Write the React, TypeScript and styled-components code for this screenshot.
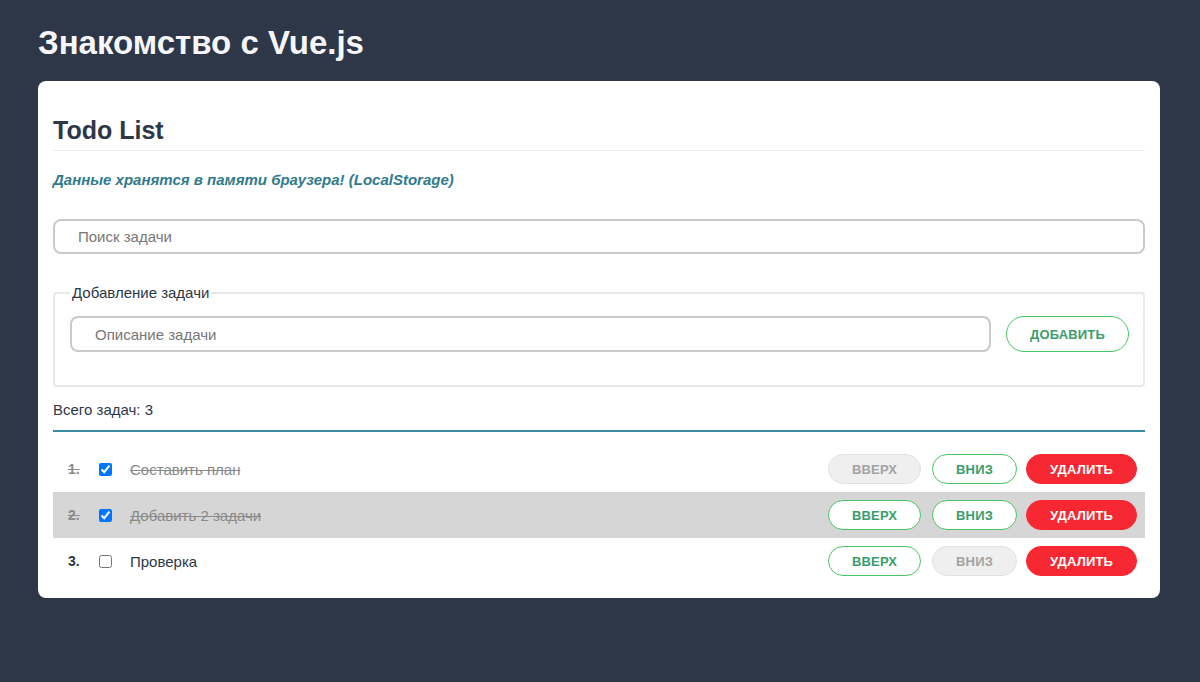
import React, { useState } from "react";
import styled, { createGlobalStyle, css } from "styled-components";

const GlobalStyle = createGlobalStyle`
  html, body { margin: 0; padding: 0; background: #2d3748; }
  body { font-family: "Liberation Sans", Arial, sans-serif; color: #2d3748; }
  * { box-sizing: border-box; }
`;

const Page = styled.div`
  padding: 0 40px 0 38px;
`;

const Title = styled.h1`
  margin: 0;
  padding: 24px 0 20px;
  font-size: 33px;
  line-height: 37px;
  font-weight: 700;
  color: #f7f7fb;
`;

const Card = styled.div`
  background: #fff;
  border-radius: 8px;
  padding: 15px 15px 14px;
`;

const CardTitle = styled.h2`
  margin: 20px 0 0;
  padding-bottom: 6px;
  font-size: 25px;
  line-height: 28px;
  font-weight: 700;
  color: #2d3748;
  border-bottom: 1px solid #ececec;
`;

const Note = styled.p`
  margin: 21px 0 0;
  font-size: 15px;
  line-height: 16px;
  font-weight: 700;
  font-style: italic;
  color: #2f7b8c;
`;

const TextInput = styled.input`
  display: block;
  width: 100%;
  height: 35px;
  border: 2px solid #c9c9c9;
  border-radius: 8px;
  padding: 0 23px;
  font-family: "Liberation Sans", Arial, sans-serif;
  font-size: 15px;
  color: #2d3748;
  outline: none;
  &::placeholder { color: #777; }
`;

const SearchInput = styled(TextInput)`
  margin-top: 31px;
`;

const AddBox = styled.fieldset`
  margin: 30px 0 0;
  border: 2px solid #e8e8e8;
  border-radius: 4px;
  padding: 15px 14px 33px 15px;
`;

const Legend = styled.legend`
  padding: 0 2px;
  margin-left: 0;
  font-size: 15px;
  line-height: 17px;
  color: #2d3748;
`;

const AddRow = styled.div`
  display: flex;
  align-items: center;
  gap: 15px;
`;

const DescInput = styled(TextInput)`
  flex: 1;
  height: 36px;
`;

const Pill = styled.button<{ $variant: "green" | "disabled" | "red" }>`
  height: 30px;
  padding: 0 23px;
  border-radius: 16px;
  border: 1px solid transparent;
  font-family: "Liberation Sans", Arial, sans-serif;
  font-size: 13px;
  font-weight: 700;
  letter-spacing: 0.15px;
  cursor: pointer;
  ${(p) =>
    p.$variant === "green"
      ? css`
          background: #fff;
          border-color: #45c763;
          color: #3a9d6c;
        `
      : p.$variant === "disabled"
      ? css`
          background: #efefef;
          border-color: #e2e2e2;
          color: #a3a3a3;
          cursor: default;
        `
      : css`
          background: #f72831;
          border-color: #f72831;
          color: #fff;
        `}
`;

const AddButton = styled(Pill)`
  height: 36px;
  width: 123px;
  border-radius: 18px;
  padding: 0;
`;

const Total = styled.div`
  margin-top: 14px;
  padding-bottom: 12px;
  font-size: 15px;
  line-height: 17px;
  color: #2d3748;
  border-bottom: 2px solid #3d8aa0;
`;

const List = styled.ul`
  list-style: none;
  margin: 14px 0 0;
  padding: 0;
`;

const Row = styled.li<{ $shaded: boolean }>`
  display: flex;
  align-items: center;
  height: 46px;
  padding: 0 8px 0 15px;
  background: ${(p) => (p.$shaded ? "#d6d6d6" : "transparent")};
`;

const Num = styled.span<{ $done: boolean }>`
  width: 31px;
  font-size: 14px;
  font-weight: 700;
  color: ${(p) => (p.$done ? "#8a8a8a" : "#2d3748")};
  text-decoration: ${(p) => (p.$done ? "line-through" : "none")};
`;

const Check = styled.input`
  margin: 0 18px 0 0;
  width: 13px;
  height: 13px;
`;

const TaskText = styled.span<{ $done: boolean }>`
  flex: 1;
  font-size: 15px;
  color: ${(p) => (p.$done ? "#8a8a8a" : "#2d3748")};
  text-decoration: ${(p) => (p.$done ? "line-through" : "none")};
`;

const Actions = styled.div`
  display: flex;
  gap: 9px;
  & > :first-child { margin-right: 2px; }
`;

type Task = { id: number; text: string; done: boolean };

export default function App() {
  const [tasks, setTasks] = useState<Task[]>([
    { id: 1, text: "Составить план", done: true },
    { id: 2, text: "Добавить 2 задачи", done: true },
    { id: 3, text: "Проверка", done: false },
  ]);

  const toggle = (id: number) =>
    setTasks((t) => t.map((x) => (x.id === id ? { ...x, done: !x.done } : x)));

  return (
    <>
      <GlobalStyle />
      <Page>
        <Title>Знакомство с Vue.js</Title>
        <Card>
          <CardTitle>Todo List</CardTitle>
          <Note>Данные хранятся в памяти браузера! (LocalStorage)</Note>
          <SearchInput placeholder="Поиск задачи" />
          <AddBox>
            <Legend>Добавление задачи</Legend>
            <AddRow>
              <DescInput placeholder="Описание задачи" />
              <AddButton $variant="green">ДОБАВИТЬ</AddButton>
            </AddRow>
          </AddBox>
          <Total>Всего задач: {tasks.length}</Total>
          <List>
            {tasks.map((t, i) => (
              <Row key={t.id} $shaded={i === 1}>
                <Num $done={t.done}>{i + 1}.</Num>
                <Check type="checkbox" checked={t.done} onChange={() => toggle(t.id)} />
                <TaskText $done={t.done}>{t.text}</TaskText>
                <Actions>
                  <Pill $variant={i === 0 ? "disabled" : "green"}>ВВЕРХ</Pill>
                  <Pill $variant={i === tasks.length - 1 ? "disabled" : "green"}>ВНИЗ</Pill>
                  <Pill $variant="red">УДАЛИТЬ</Pill>
                </Actions>
              </Row>
            ))}
          </List>
        </Card>
      </Page>
    </>
  );
}
